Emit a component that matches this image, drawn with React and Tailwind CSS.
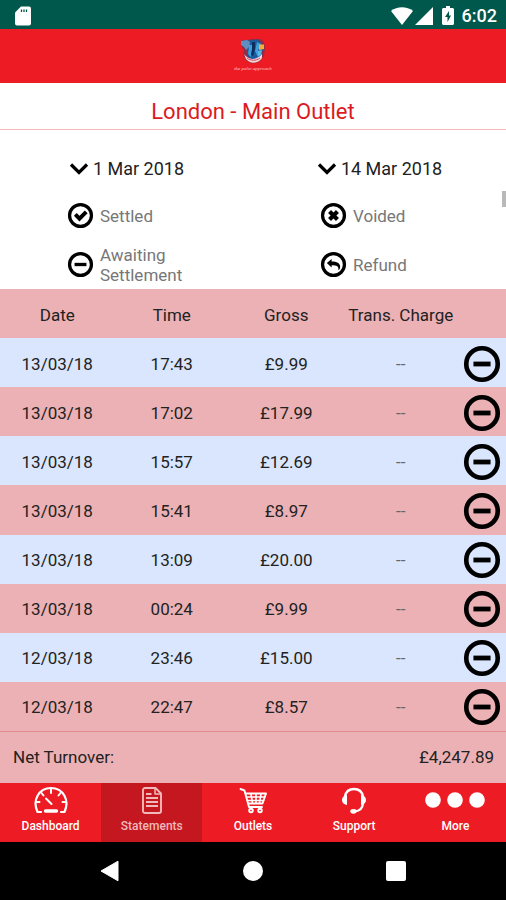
import React from "react";

const rows = [
  ["13/03/18", "17:43", "£9.99"],
  ["13/03/18", "17:02", "£17.99"],
  ["13/03/18", "15:57", "£12.69"],
  ["13/03/18", "15:41", "£8.97"],
  ["13/03/18", "13:09", "£20.00"],
  ["13/03/18", "00:24", "£9.99"],
  ["12/03/18", "23:46", "£15.00"],
  ["12/03/18", "22:47", "£8.57"],
];

function StatusIcon({ kind, className }) {
  return (
    <svg viewBox="0 0 24 24" className={className} fill="none" stroke="currentColor" aria-hidden="true">
      <circle cx="12" cy="12" r="10.500" strokeWidth="3.100" />
      {kind === "awaiting" && <path d="M6.300 12h11.400" strokeWidth="3.200" />}
      {kind === "settled" && <path d="M7 11l4 4 6.500-6.500" strokeWidth="3.800" />}
      {kind === "voided" && <path d="M8.200 8.200l7.600 7.600M15.800 8.200l-7.600 7.600" strokeWidth="4" />}
      {kind === "refund" && (
        <path
          d="M5.600 10.600l4.600-4v2.500c5 0 8.200 1.400 8.200 5.200 0 1.400-.8 2.600-1.800 3.300.9-3.700-1.500-4.900-6.400-4.900v2.100z"
          fill="currentColor"
          stroke="none"
        />
      )}
    </svg>
  );
}

function DateButton({ children }) {
  return (
    <button type="button" className="flex h-[49px] items-center justify-center gap-1 pt-1 text-lg text-[#222]">
      <svg viewBox="0 0 20 14" className="h-3.5 w-5" fill="none" stroke="#000" strokeWidth="3.200" aria-hidden="true">
        <path d="M2 2.500l8 8 8-8" />
      </svg>
      {children}
    </button>
  );
}

function Legend({ kind, children }) {
  return (
    <div className="flex h-[49px] items-center gap-[7px] pl-[68px] text-[17px] leading-5 text-[#777]">
      <StatusIcon kind={kind} className="size-[25px] shrink-0 overflow-visible text-black" />
      <span className="w-[100px]">{children}</span>
    </div>
  );
}

function Logo() {
  return (
    <div className="flex flex-col items-center">
      <svg viewBox="0 0 28 26" className="h-[26px] w-7" aria-hidden="true">
        <path d="M3 2l6 0 3-1 9 0 4 3 1 6-1 8-5 6-7 1.500-6-3-3-6 1-4-3-5z" fill="#8a3048" />
        <path d="M9 2.500l10-1 4 5 1 5-3 8-8 3-5-5 0-8z" fill="#1a5a9e" />
        <path d="M2 3l6-1 3 2-1 5-3 3-2-3-3-2z" fill="#5f8fc0" />
        <path d="M10 7h4l-2 12-3-3 1-7zM18 4l4 2-3 6 3 4-3 3-3-6z" fill="#3f9fd8" />
        <path d="M13 4h3l0 7-2 7-2-1 1-6z" fill="#102c5d" />
        <path d="M20 6.500l5 0 0 4.500-5 1z" fill="#f1ae3e" />
        <path d="M19 13l4-1-1 5-3 1z" fill="#58b7e8" />
        <path d="M5 16c4 6 12 7 18 0l0 4c-4 6-12 6-16 1z" fill="#f6d4d8" />
        <path d="M8 20c4 3 9 3 13 0" fill="none" stroke="#d0445a" strokeWidth="1" />
      </svg>
      <span className="whitespace-nowrap font-['Liberation_Serif',serif] text-[5px] italic leading-[10px] text-[#ffc9c9]">
        the palm approach
      </span>
    </div>
  );
}

function DashboardIcon() {
  return (
    <svg viewBox="0 0 36 28" className="h-7 w-9" fill="none" stroke="currentColor" strokeWidth="2.200" strokeLinecap="round" aria-hidden="true">
      <path d="M8 26H4.500C-1 14 6 2 18 2s19 12 13.500 24H28" strokeLinejoin="round" />
      <path d="M18 3v4M8.500 7l2 2.500M27.500 7l-2 2.500M3 16h3.500M33 16h-3.500M13 12.500l5.500 5.500" strokeWidth="2" />
      <path d="M12.500 25h11" strokeWidth="3.400" />
    </svg>
  );
}

function StatementIcon() {
  return (
    <svg viewBox="0 0 20 27" className="h-[27px] w-5" fill="none" stroke="currentColor" strokeWidth="1.900" strokeLinejoin="round" aria-hidden="true">
      <path d="M3 1h10.500L19 6.500V24a2 2 0 01-2 2H3a2 2 0 01-2-2V3a2 2 0 012-2z" />
      <path d="M13 1.500v5.500h5.500" strokeWidth="1.500" />
      <path d="M4 7h5.500M4 11h12M4 15h12M4 19h12" strokeWidth="1.800" />
    </svg>
  );
}

function CartIcon() {
  return (
    <svg viewBox="0 0 30 27" className="h-[27px] w-[30px]" fill="none" stroke="currentColor" strokeWidth="1.900" strokeLinejoin="round" strokeLinecap="round" aria-hidden="true">
      <path d="M2.500 2l4 1.500 4.500 16.500h13" />
      <path d="M7.500 6.500h20.500l-3.500 10H10.500" />
      <path d="M8.500 10h18M9.500 13.500h16M13 7l1.500 9M18 7v9M23 7l-1.500 9" strokeWidth="1.600" />
      <circle cx="13" cy="23.500" r="1.800" />
      <circle cx="22" cy="23.500" r="1.800" />
    </svg>
  );
}

function SupportIcon() {
  return (
    <svg viewBox="0 0 26 27" className="h-[27px] w-[26px]" fill="none" stroke="currentColor" strokeWidth="2.300" aria-hidden="true">
      <path d="M4 9.500C5 4 8.500 2 13 2s8 2 9 7.500M22 16.500c-.5 5-3.500 7.500-8 7.800" />
      <path d="M6 8v10C2.500 17.500 1 15.500 1 13s1.500-4.500 5-5zM20 8v10c3.500-.5 5-2.500 5-5s-1.500-4.500-5-5z" fill="currentColor" stroke="none" />
      <ellipse cx="12.500" cy="24.300" rx="3.200" ry="2.400" fill="currentColor" stroke="none" />
    </svg>
  );
}

function MoreIcon() {
  return (
    <svg viewBox="0 0 62 27" className="h-[27px] w-[62px]" fill="currentColor" aria-hidden="true">
      <circle cx="9" cy="13" r="7.800" />
      <circle cx="31" cy="13" r="7.800" />
      <circle cx="53" cy="13" r="7.800" />
    </svg>
  );
}

const tabs = [
  { name: "Dashboard", Icon: DashboardIcon },
  { name: "Statements", Icon: StatementIcon, active: true },
  { name: "Outlets", Icon: CartIcon },
  { name: "Support", Icon: SupportIcon },
  { name: "More", Icon: MoreIcon },
];

export default function App() {
  return (
    <div className="relative flex min-h-screen flex-col bg-white font-[Roboto,sans-serif]">
      <div className="flex h-[29px] items-center bg-[#00574b] pl-[15px] pr-[9px] pt-0.5 text-white">
        <svg viewBox="0 0 16 20" className="h-5 w-4" aria-hidden="true">
          <path d="M6 0.500h8a2 2 0 012 2v15a2 2 0 01-2 2H2a2 2 0 01-2-2V6.500z" fill="currentColor" />
          <path d="M6.500 3.500v2.500M9 3.500v2.500M11.500 3.500v2.500" stroke="#00574b" strokeWidth="1.300" />
        </svg>
        <svg viewBox="0 0 22 18" className="ml-auto h-[18px] w-[22px]" fill="currentColor" aria-hidden="true">
          <path d="M0 4C6-1 16-1 22 4L11 18z" />
        </svg>
        <svg viewBox="0 0 18 18" className="ml-0.5 size-[18px]" fill="currentColor" aria-hidden="true">
          <path d="M18 0v18H0z" />
        </svg>
        <svg viewBox="0 0 12 19" className="ml-[9px] mr-2 h-[19px] w-3" fill="currentColor" aria-hidden="true">
          <path d="M4 0h4v2h3l1 1v15l-1 1H1l-1-1V3l1-1h3z" />
          <path d="M7 5l-4 6h2.500v5L9 9.500H7z" fill="#00574b" />
        </svg>
        <span className="text-lg font-medium">6:02</span>
      </div>

      <header className="flex h-[54px] items-center justify-center bg-[#ed1c24]">
        <Logo />
      </header>
      <h1 className="flex h-[46px] items-center justify-center pt-3 text-[22px] leading-8 text-[#dc1a22]">
        London - Main Outlet
      </h1>
      <div className="h-px bg-[#f5b8bb]" />

      <section className="grid grid-cols-2 pt-3">
        <DateButton>1 Mar 2018</DateButton>
        <DateButton>14 Mar 2018</DateButton>
        <Legend kind="settled">Settled</Legend>
        <Legend kind="voided">Voided</Legend>
        <Legend kind="awaiting">Awaiting Settlement</Legend>
        <Legend kind="refund">Refund</Legend>
      </section>

      <table className="h-[442px] w-full table-fixed text-center text-[17px] leading-6 text-[#222]">
        <thead>
          <tr className="h-[49px] bg-[#ecb1b4]">
            <th className="pt-0.5 font-normal">Date</th>
            <th className="pt-0.5 font-normal">Time</th>
            <th className="pt-0.5 font-normal">Gross</th>
            <th className="pt-0.5 font-normal">Trans. Charge</th>
            <th className="w-12" aria-label="Status" />
          </tr>
        </thead>
        <tbody>
          {rows.map(([date, time, gross]) => (
            <tr key={date + time} className="h-[49px] odd:bg-[#d9e6fd] even:bg-[#ecb1b4]">
              <td className="pt-0.5">{date}</td>
              <td className="pt-0.5">{time}</td>
              <td className="pt-0.5">{gross}</td>
              <td className="pt-0.5 text-[#666]">--</td>
              <td className="pt-0.5">
                <StatusIcon kind="awaiting" className="mx-auto size-9 overflow-visible text-black" />
              </td>
            </tr>
          ))}
        </tbody>
      </table>

      <div className="h-px bg-[#e38b90]" />
      <div className="flex h-[51px] items-center justify-between bg-[#ecb1b4] pl-[13px] pr-3 text-[17px] text-[#222]">
        <span>Net Turnover:</span>
        <span>£4,247.89</span>
      </div>

      <nav className="grid h-[59px] grid-cols-5 bg-[#ed1c24]">
        {tabs.map(({ name, Icon, active }) => (
          <button
            key={name}
            type="button"
            aria-current={active ? "page" : undefined}
            className={
              active
                ? "flex flex-col items-center bg-[#c4171f] pt-[3px] text-[#f0b9bb]"
                : "flex flex-col items-center pt-[3px] text-white"
            }
          >
            <span className="flex h-7 items-center">
              <Icon />
            </span>
            <span className="pt-0.5 text-xs font-medium leading-5">{name}</span>
          </button>
        ))}
      </nav>

      <div className="grid flex-1 grid-cols-[1fr_20px_123px_20px_123px_20px_1fr] items-center bg-black">
        <button type="button" aria-label="Back" className="col-start-2">
          <svg viewBox="0 0 20 22" className="h-[22px] w-5" fill="#fff" aria-hidden="true">
            <path d="M18 1.200V20.800L1 11z" stroke="#fff" strokeLinejoin="round" />
          </svg>
        </button>
        <button type="button" aria-label="Home" className="col-start-4 size-5 rounded-full bg-white" />
        <button type="button" aria-label="Recent apps" className="col-start-6 size-5 rounded-xs bg-white" />
      </div>

      <div className="absolute right-0 top-[191px] h-4 w-1 bg-[#b9b9b9]" />
    </div>
  );
}
